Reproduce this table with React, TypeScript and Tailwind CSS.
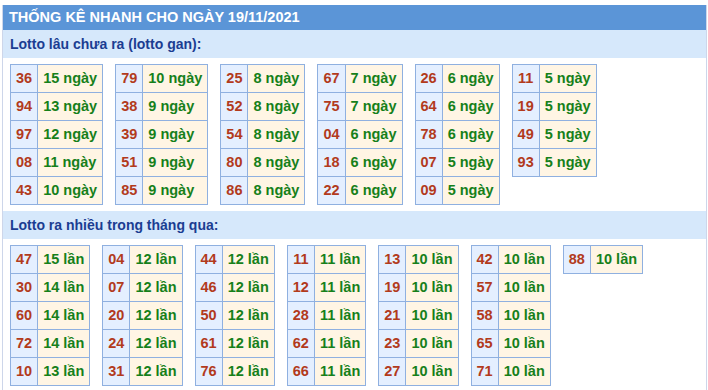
const gan: [string, string][][] = [
  [["36", "15"], ["94", "13"], ["97", "12"], ["08", "11"], ["43", "10"]],
  [["79", "10"], ["38", "9"], ["39", "9"], ["51", "9"], ["85", "9"]],
  [["25", "8"], ["52", "8"], ["54", "8"], ["80", "8"], ["86", "8"]],
  [["67", "7"], ["75", "7"], ["04", "6"], ["18", "6"], ["22", "6"]],
  [["26", "6"], ["64", "6"], ["78", "6"], ["07", "5"], ["09", "5"]],
  [["11", "5"], ["19", "5"], ["49", "5"], ["93", "5"]],
]

const nhieu: [string, string][][] = [
  [["47", "15"], ["30", "14"], ["60", "14"], ["72", "14"], ["10", "13"]],
  [["04", "12"], ["07", "12"], ["20", "12"], ["24", "12"], ["31", "12"]],
  [["44", "12"], ["46", "12"], ["50", "12"], ["61", "12"], ["76", "12"]],
  [["11", "11"], ["12", "11"], ["28", "11"], ["62", "11"], ["66", "11"]],
  [["13", "10"], ["19", "10"], ["21", "10"], ["23", "10"], ["27", "10"]],
  [["42", "10"], ["57", "10"], ["58", "10"], ["65", "10"], ["71", "10"]],
  [["88", "10"]],
]

function LotoTable({ rows, unit }: { rows: [string, string][]; unit: string }) {
  return (
    <table className="border-collapse border border-[#8fb0e0] text-[14.5px] font-bold">
      <tbody>
        {rows.map(([num, count]) => (
          <tr key={num} className="h-[28px]">
            <td className="border border-[#8fb0e0] bg-[#e4efff] px-[5px] text-center text-[#b23a1c]">{num}</td>
            <td className="border border-[#8fb0e0] bg-[#fff5e4] px-[5px] text-[#16801a]">
              {count} {unit}
            </td>
          </tr>
        ))}
      </tbody>
    </table>
  )
}

function Section({ title, tables, unit }: { title: string; tables: [string, string][][]; unit: string }) {
  return (
    <>
      <div className="h-[28px] bg-[#d6e8fb] pl-[7px] text-[14px] font-bold leading-[28px] text-[#1b3d92]">
        {title}
      </div>
      <div className="flex items-start gap-[12px] px-[7px] py-[6px]">
        {tables.map((t, i) => (
          <LotoTable key={i} rows={t} unit={unit} />
        ))}
      </div>
    </>
  )
}

export default function App() {
  return (
    <div className="h-[390px] w-[708px] bg-white pt-[5px] pl-[2px]" style={{ fontFamily: '"Liberation Sans", Arial, sans-serif' }}>
      <div className="h-[385px] w-[705px] border-x border-[#cdd6ea]">
        <div className="h-[25px] bg-[#5b95d7] pl-[6px] text-[14.5px] font-bold leading-[25px] text-white">
          THỐNG KÊ NHANH CHO NGÀY 19/11/2021
        </div>
        <Section title="Lotto lâu chưa ra (lotto gan):" tables={gan} unit="ngày" />
        <Section title="Lotto ra nhiều trong tháng qua:" tables={nhieu} unit="lần" />
      </div>
    </div>
  )
}
